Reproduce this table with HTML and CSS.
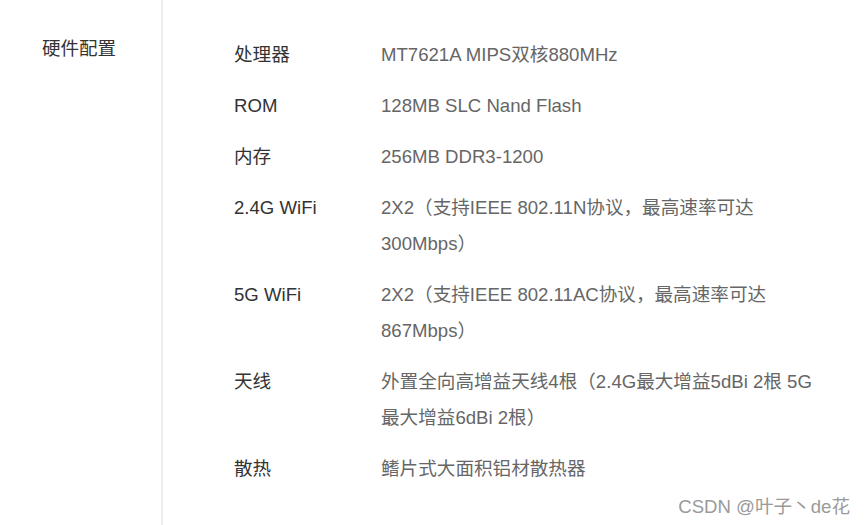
FILE: index.html
```html
<!DOCTYPE html>
<html lang="zh-CN">
<head>
<meta charset="utf-8">
<title>硬件配置</title>
<link rel="stylesheet" href="styles.css">
</head>
<body>
<div class="page">
  <aside class="side">
    <h2 class="side-title">硬件配置</h2>
  </aside>
  <main class="specs">
    <div class="row"><div class="label">处理器</div><div class="value">MT7621A MIPS双核880MHz</div></div>
    <div class="row"><div class="label">ROM</div><div class="value">128MB SLC Nand Flash</div></div>
    <div class="row"><div class="label">内存</div><div class="value">256MB DDR3-1200</div></div>
    <div class="row"><div class="label">2.4G WiFi</div><div class="value">2X2（支持IEEE 802.11N协议，最高速率可达 300Mbps）</div></div>
    <div class="row"><div class="label">5G WiFi</div><div class="value">2X2（支持IEEE 802.11AC协议，最高速率可达 867Mbps）</div></div>
    <div class="row"><div class="label">天线</div><div class="value">外置全向高增益天线4根（2.4G最大增益5dBi 2根 5G 最大增益6dBi 2根）</div></div>
    <div class="row"><div class="label">散热</div><div class="value">鳍片式大面积铝材散热器</div></div>
  </main>
  <div class="watermark">CSDN @叶子丶de花</div>
</div>
</body>
</html>
```

FILE: styles.css
```css
html, body {
  margin: 0;
  padding: 0;
  background: #fff;
}
body {
  font-family: "Liberation Sans", Arial, "Noto Sans CJK SC", sans-serif;
  color: #333;
}
.page {
  position: relative;
  display: flex;
  width: 865px;
  height: 525px;
  overflow: hidden;
}
.side {
  width: 119px;
  flex: none;
  padding: 37px 0 0 42px;
  border-right: 2px solid #eeeeee;
}
.side-title {
  margin: 0;
  font-size: 18.5px;
  font-weight: normal;
  line-height: 24px;
  color: #333;
}
.specs {
  flex: none;
  padding: 37px 0 0 71px;
  display: flex;
  flex-direction: column;
  gap: 15px;
}
.row {
  display: flex;
  font-size: 18.6px;
  line-height: 36px;
}
.label {
  width: 147px;
  flex: none;
  color: #333;
}
.value {
  width: 438px;
  color: #666;
}
.watermark {
  position: absolute;
  right: 15px;
  bottom: 8px;
  font-size: 18.6px;
  line-height: 20px;
  color: #9a9a9a;
  text-shadow: 0 0 1px #fff, 0 0 1px #fff;
}
```
